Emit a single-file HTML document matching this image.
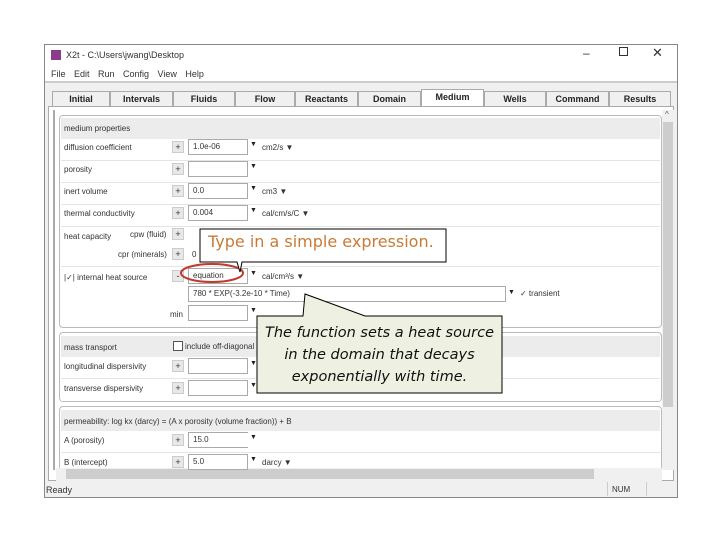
<!DOCTYPE html>
<html><head><meta charset="utf-8"><style>
*{margin:0;padding:0;box-sizing:border-box}
body{width:720px;height:540px;background:#fff;position:relative;overflow:hidden;font-family:"Liberation Sans",sans-serif;font-size:8px;color:#333}
.a{position:absolute}
.win{left:44px;top:44px;width:634px;height:454px;border:1px solid #888;background:#f0f0f0}
.tab{position:absolute;top:91px;height:15px;font-weight:bold;font-size:9px;text-align:center;line-height:15px;border:1px solid #aaa;border-bottom:none;background:#f0f0f0;color:#222}
.row{position:absolute;left:61px;width:599px;height:22px;border-bottom:1px solid #e4e4e4;background:#fff}
.hdr{position:absolute;left:61px;width:599px;height:21px;background:#ececec}
.lbl{position:absolute;font-size:8px;color:#333}
.pl{position:absolute;width:12px;height:12px;background:#e8e8e8;border:1px solid #ccc;font-size:9px;text-align:center;line-height:10px;color:#333}
.in{position:absolute;width:60px;height:16px;border:1px solid #aaa;background:#fff;font-size:8px;padding-left:4px;line-height:14px}
.dd{position:absolute;font-size:7px;color:#222}
</style></head><body>
<div class="a win"></div>
<div class="a" style="left:45px;top:45px;width:632px;height:21px;background:#fff"></div>
<div class="a" style="left:51px;top:50px;width:10px;height:10px;background:#8a3b8a"></div>
<div class="a" style="left:66px;top:50px;font-size:9px;color:#333">X2t - C:\Users\jwang\Desktop</div>
<div class="a" style="left:583px;top:46px;font-size:12px;color:#333">–</div>
<div class="a" style="left:619px;top:47px;width:9px;height:9px;border:1px solid #333"></div>
<div class="a" style="left:652px;top:45px;font-size:13px;color:#333">✕</div>
<div class="a" style="left:45px;top:66px;width:632px;height:17px;background:#fff;border-bottom:2px solid #ccc"></div>
<div class="a" style="left:51px;top:69px;font-size:9px;color:#333;word-spacing:6px">File Edit Run Config View Help</div>
<div class="tab" style="left:52px;width:58px">Initial</div>
<div class="tab" style="left:110px;width:63px">Intervals</div>
<div class="tab" style="left:173px;width:62px">Fluids</div>
<div class="tab" style="left:235px;width:60px">Flow</div>
<div class="tab" style="left:295px;width:63px">Reactants</div>
<div class="tab" style="left:358px;width:63px">Domain</div>
<div class="tab" style="left:421px;top:89px;height:18px;width:63px;background:#fff">Medium</div>
<div class="tab" style="left:484px;width:62px">Wells</div>
<div class="tab" style="left:546px;width:63px">Command</div>
<div class="tab" style="left:609px;width:62px">Results</div>
<div class="a" style="left:48px;top:106px;width:626px;height:375px;background:#fff;border:1px solid #aaa"></div>
<div class="a" style="left:53px;top:110px;width:2px;height:360px;background:#aaa"></div>
<div class="a" style="left:662px;top:110px;width:12px;height:360px;background:#f0f0f0"></div>
<div class="a" style="left:665px;top:110px;font-size:8px;color:#555">^</div>
<div class="a" style="left:663px;top:122px;width:10px;height:285px;background:#cdcdcd"></div>
<div class="a" style="left:56px;top:468px;width:606px;height:13px;background:#f0f0f0"></div>
<div class="a" style="left:66px;top:469px;width:528px;height:10px;background:#cdcdcd"></div>
<div class="a" style="left:59px;top:115px;width:603px;height:213px;border:1px solid #bbb;border-radius:4px;background:#fff"></div>
<div class="hdr" style="top:118px"></div><div class="lbl" style="left:64px;top:124px">medium properties</div>
<div class="row" style="top:139px"></div><div class="lbl" style="left:64px;top:143px">diffusion coefficient</div>
<div class="row" style="top:161px"></div><div class="lbl" style="left:64px;top:165px">porosity</div>
<div class="row" style="top:183px"></div><div class="lbl" style="left:64px;top:187px">inert volume</div>
<div class="row" style="top:205px"></div><div class="lbl" style="left:64px;top:209px">thermal conductivity</div>
<div class="row" style="top:227px;height:40px"></div><div class="lbl" style="left:64px;top:232px">heat capacity</div>
<div class="lbl" style="left:130px;top:230px">cpw (fluid)</div><div class="lbl" style="left:118px;top:250px">cpr (minerals)</div>
<div class="row" style="top:267px;height:57px;border:none"></div><div class="lbl" style="left:64px;top:273px">|✓| internal heat source</div>
<div class="lbl" style="left:170px;top:310px">min</div>
<div class="pl" style="left:172px;top:141px">+</div><div class="in" style="left:188px;top:139px">1.0e-06</div><div class="dd" style="left:250px;top:141px">▼</div><div class="lbl" style="left:262px;top:143px">cm2/s ▼</div>
<div class="pl" style="left:172px;top:163px">+</div><div class="in" style="left:188px;top:161px"></div><div class="dd" style="left:250px;top:163px">▼</div>
<div class="pl" style="left:172px;top:185px">+</div><div class="in" style="left:188px;top:183px">0.0</div><div class="dd" style="left:250px;top:185px">▼</div><div class="lbl" style="left:262px;top:187px">cm3 ▼</div>
<div class="pl" style="left:172px;top:207px">+</div><div class="in" style="left:188px;top:205px">0.004</div><div class="dd" style="left:250px;top:207px">▼</div><div class="lbl" style="left:262px;top:209px">cal/cm/s/C ▼</div>
<div class="pl" style="left:172px;top:228px">+</div><div class="pl" style="left:172px;top:248px">+</div><div class="lbl" style="left:192px;top:250px">0</div>
<div class="pl" style="left:172px;top:270px">-</div><div class="in" style="left:188px;top:268px">equation</div><div class="dd" style="left:250px;top:270px">▼</div><div class="lbl" style="left:262px;top:272px">cal/cm³/s ▼</div>
<div class="in" style="left:188px;top:286px;width:318px">780 * EXP(-3.2e-10 * Time)</div><div class="dd" style="left:508px;top:289px">▼</div><div class="lbl" style="left:520px;top:289px">✓ transient</div>
<div class="in" style="left:188px;top:305px"></div><div class="dd" style="left:250px;top:307px">▼</div>
<div class="a" style="left:59px;top:332px;width:603px;height:70px;border:1px solid #bbb;border-radius:4px;background:#fff"></div>
<div class="hdr" style="top:336px"></div><div class="lbl" style="left:64px;top:343px">mass transport</div>
<div class="a" style="left:173px;top:341px;width:10px;height:10px;border:1px solid #555;background:#fff"></div><div class="lbl" style="left:185px;top:342px">include off-diagonal terms</div>
<div class="row" style="top:357px"></div><div class="lbl" style="left:64px;top:362px">longitudinal dispersivity</div>
<div class="row" style="top:379px;border:none"></div><div class="lbl" style="left:64px;top:384px">transverse dispersivity</div>
<div class="pl" style="left:172px;top:360px">+</div><div class="in" style="left:188px;top:358px"></div><div class="dd" style="left:250px;top:360px">▼</div>
<div class="pl" style="left:172px;top:382px">+</div><div class="in" style="left:188px;top:380px"></div><div class="dd" style="left:250px;top:382px">▼</div>
<div class="a" style="left:59px;top:406px;width:603px;height:62px;border:1px solid #bbb;border-radius:4px 4px 0 0;border-bottom:none;background:#fff"></div>
<div class="hdr" style="top:410px"></div><div class="lbl" style="left:64px;top:417px">permeability: log kx (darcy) = (A x porosity (volume fraction)) + B</div>
<div class="row" style="top:431px"></div><div class="lbl" style="left:64px;top:436px">A (porosity)</div>
<div class="lbl" style="left:64px;top:458px">B (intercept)</div>
<div class="pl" style="left:172px;top:434px">+</div><div class="in" style="left:188px;top:432px;border-right:none">15.0</div><div class="dd" style="left:250px;top:434px">▼</div>
<div class="pl" style="left:172px;top:456px">+</div><div class="in" style="left:188px;top:454px">5.0</div><div class="dd" style="left:250px;top:456px">▼</div><div class="lbl" style="left:262px;top:458px">darcy ▼</div>
<div class="lbl" style="left:46px;top:485px;font-size:9px">Ready</div>
<div class="a" style="left:607px;top:482px;width:40px;height:14px;border-left:1px solid #ccc;border-right:1px solid #ccc"></div>
<div class="lbl" style="left:612px;top:485px">NUM</div>
<svg class="a" style="left:0;top:0" width="720" height="540">
<ellipse cx="212" cy="273" rx="31" ry="9" fill="none" stroke="#c0392b" stroke-width="2"/>
<path d="M200 229 H446 V262 H242 L240 272 L237 262 H200 Z" fill="#fff" stroke="#000" stroke-width="1"/>
<path d="M257 316 H303 L305 294 L365 316 H502 V393 H257 Z" fill="#eef0e1" stroke="#000" stroke-width="1"/>
</svg>
<div class="a" style="left:208px;top:232px;font-size:16px;color:#c87b35;font-family:'DejaVu Sans',sans-serif">Type in a simple expression.</div>
<div class="a" style="left:257px;top:322px;width:245px;text-align:center;font-size:14.5px;line-height:22px;font-style:italic;color:#111;font-family:'DejaVu Sans',sans-serif">The function sets a heat source in the domain that decays exponentially with time.</div>
</body></html>
